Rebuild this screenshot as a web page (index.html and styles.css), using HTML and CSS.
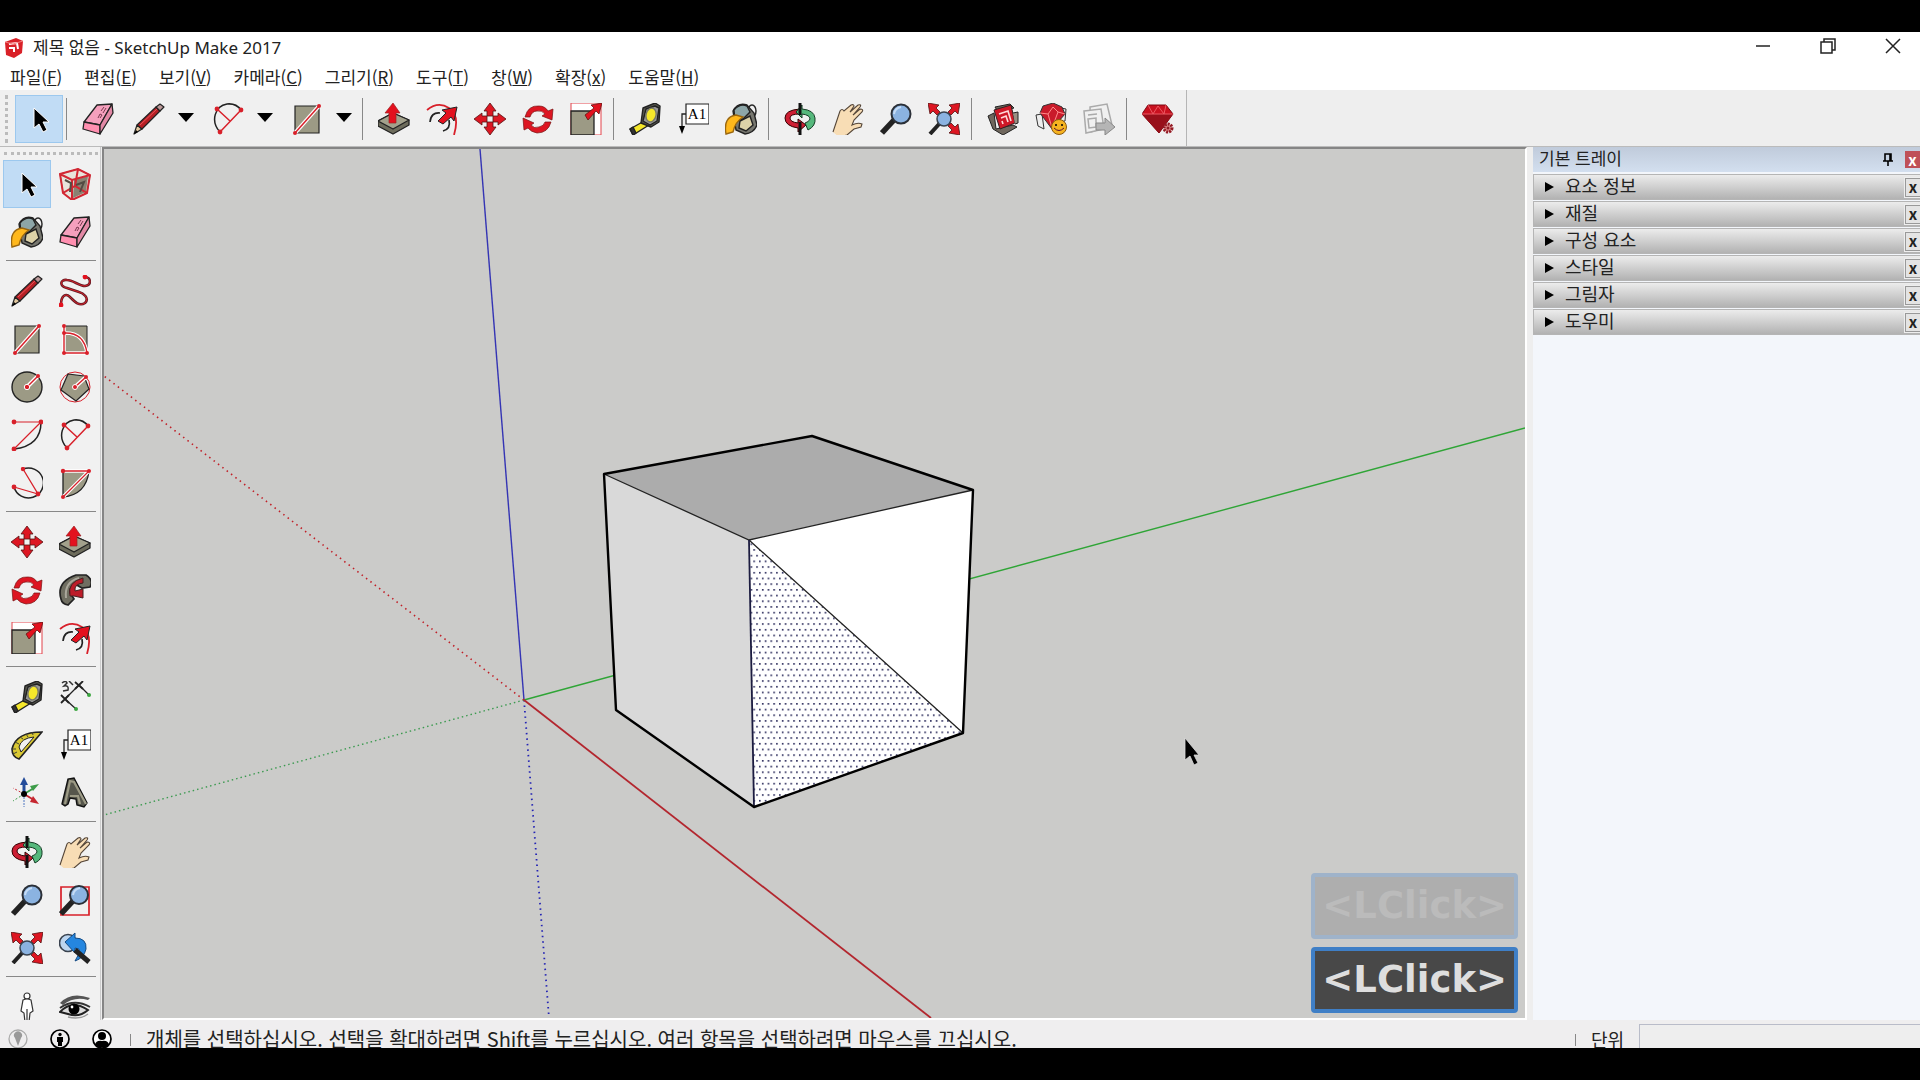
FILE: index.html
```html
<!DOCTYPE html>
<html lang="ko">
<head>
  <meta charset="UTF-8" />
  <meta name="viewport" content="width=device-width, initial-scale=1.0"/>
  <title>제목 없음 - SketchUp Make 2017</title>
  <link rel="stylesheet" href="styles.css">
</head>
<body>
  <!-- Icon set -->
  <svg class="icon-defs" aria-hidden="true">
    <symbol id="i-select" viewBox="0 0 32 32"><path d="M11 5v20l5-4 4 8 4-2-4-8h6z" fill="#000" stroke="#fff" stroke-width="1"/></symbol>
    <symbol id="i-eraser" viewBox="0 0 32 32"><g stroke="#222" stroke-width="1.3" stroke-linejoin="round"><path d="M15 2l15-1-12 21-16-3z" fill="#f5a0bd"/><path d="M2 19l16 3v9L1 26z" fill="#ff8fb0"/><path d="M30 1l1 9-13 21v-9z" fill="#e389a6"/></g><path d="M16 15l2-4 2 1-2 3m1-7l3-4m-1 6l3-5" fill="none" stroke="#7a3a50"/></symbol>
    <symbol id="i-pencil" viewBox="0 0 32 32"><g stroke="#222" stroke-width="1.2" stroke-linejoin="round"><path d="M1 31l3-9 5 4z" fill="#e3c9a0"/><path d="M4 22L23 4l4 4L9 26z" fill="#b81f25"/><path d="M23 4l4-3 4 3-4 4z" fill="#b99"/></g><path d="M1 31l2-4 2 2z"/><path d="M7 22L24 6" stroke="#e8575a" stroke-width="1"/></symbol>
    <symbol id="i-arc" viewBox="0 0 32 32"><path d="M8 29C-2 18 3 3 15 1q9-1 14 6" fill="none" stroke="#222" stroke-width="1.5"/><path d="M29 7L8 29M5 6l13 12" fill="none" stroke="#d8202a" stroke-width="1.5"/><g fill="#d8202a"><circle cx="29" cy="7" r="2.4"/><circle cx="8" cy="29" r="2.4"/><circle cx="5" cy="6" r="2.4"/></g></symbol>
    <symbol id="i-rect" viewBox="0 0 32 32"><path d="M4 3h24v27H4z" fill="#9c9a85" stroke="#222" stroke-width="1.2"/><path d="M4 30L28 3" stroke="#fff" stroke-width="4"/><path d="M4 30L28 3" stroke="#d8202a" stroke-width="1.5"/><g fill="#d8202a"><circle cx="28" cy="3" r="2"/><circle cx="4" cy="30" r="2"/></g></symbol>
    <symbol id="i-pushpull" viewBox="0 0 32 32"><g stroke="#222" stroke-width="1.3" stroke-linejoin="round"><path d="M0 18l15-8 16 7v5L15 31 0 23z" fill="#6d6c5c"/><path d="M0 18l15-8 16 7-16 9z" fill="#a3a18c"/><path d="M11 20V10H7l8-10 7 10h-4v10z" fill="#e3111e" stroke="#922" stroke-width=".7"/></g></symbol>
    <symbol id="i-offset" viewBox="0 0 32 32"><path d="M1 7Q12-2 23 5t5 27" fill="none" stroke="#d8202a" stroke-width="1.8"/><path d="M4 19Q5 9 14 10m9 7q2 9-6 11" fill="none" stroke="#222" stroke-width="1.7"/><path d="M12 18l8-8-4-3L31 4l-3 14-3-4-8 7z" fill="#e3111e" stroke="#222"/></symbol>
    <symbol id="i-move" viewBox="0 0 32 32"><g fill="#dd1622" stroke="#511" stroke-width=".8"><path d="M16 0l6 8h-3v5h-6V8h-3z"/><path d="M16 32l6-8h-3v-5h-6v5h-3z"/><path d="M0 16l8-6v3h5v6H8v3z"/><path d="M32 16l-8-6v3h-5v6h5v3z"/></g></symbol>
    <symbol id="i-rotate" viewBox="0 0 32 32"><g fill="#dd1622" stroke="#711" stroke-width=".7"><path d="M3 14Q6 2 17 3q6 0 9 5l5-2-1 11-10-4 3-2q-3-4-8-3-5 0-7 6z"/><path d="M29 19q-3 11-14 11-6-1-9-5l-4 2-1-12 11 5-3 2q3 4 8 2 5-1 6-5z"/></g></symbol>
    <symbol id="i-scale" viewBox="0 0 32 32"><path d="M1 0h30v32H1z" fill="#fff" stroke="#e2424a" stroke-width="1"/><path d="M1 8h23v24H1z" fill="#9c9a85" stroke="#222" stroke-width="1.3"/><path d="M15 12l9-7-3-3L32 0l-3 11-3-3-8 9z" fill="#e3111e" stroke="#611" stroke-width=".8"/></symbol>
    <symbol id="i-tape" viewBox="0 0 32 32"><g stroke="#222" stroke-width="1.4" stroke-linejoin="round"><path d="M1 26l16-9 3 5L4 32z" fill="#f5e72a"/><path d="M1 26l3-2 3 6-3 2z" fill="#333"/><path d="M14 5l12-5 5 3-1 16-8 5-10-4z" fill="#55554c"/><path d="M17 6l9-3 4 2-2 13-7 4-7-4z" fill="#999"/><ellipse cx="22" cy="12" rx="5" ry="7" transform="rotate(15 22 12)" fill="#f5e72a" stroke="#776"/></g></symbol>
    <symbol id="i-text" viewBox="0 0 32 32"><path d="M9 1h23v20H9z" fill="#fff" stroke="#222" stroke-width="1.2"/><path d="M9 11H5v12" fill="none" stroke="#222" stroke-width="1.3"/><path d="M2 23h6l-3 8z"/><text x="20" y="16" text-anchor="middle" class="icon-text">A1</text></symbol>
    <symbol id="i-paint" viewBox="0 0 32 32"><g stroke="#222" stroke-width="1.4"><ellipse cx="27" cy="8" rx="4" ry="6" fill="none"/><path d="M8 8Q13-1 22 2l7 8 3 12q-3 8-12 9l-9-4z" fill="#77776f"/><path d="M9 7q6-7 13-4l3 6-7 7-8 3z" fill="#8da6a8"/><path d="M15 18l10-5 3 9-7 6-7-3z" fill="#ddd2a8"/><path d="M1 31Q-2 14 11 12l7 2Q10 19 8 29z" fill="#ffb81c" stroke="#9a6710"/></g></symbol>
    <symbol id="i-orbit" viewBox="0 0 32 32"><path d="M16 6Q1 7 1 15q0 8 13 10v4l8-7-8-6v4Q6 19 6 15t10-4z" fill="#cd1e33" stroke="#300" /><path d="M31 15q-1-8-13-9V2l-6 7 6 6v-4q8 1 8 5-1 3-5 4l3 7q8-4 7-12z" fill="#56b87c" stroke="#153d25"/><path d="M16 0v12M16 19v13" stroke="#111" stroke-width="3"/></symbol>
    <symbol id="i-hand" viewBox="0 0 32 32"><path d="M1 29l5-15 2-6Q10 5 12 8l7-6q3-1 3 1l-4 6 8-7q4-1 2 2l-7 8 7-6q4 0 2 3l-8 8-2 5q6-3 10-1l-1 3-7 2-7 6-8 2" fill="#f8ddb5" stroke="#554638" stroke-width="1.1"/></symbol>
    <symbol id="i-zoom" viewBox="0 0 32 32"><path d="M14 17L2 30" stroke="#222" stroke-width="5.5"/><circle cx="21" cy="11" r="9.5" fill="#8bb3e1" stroke="#2b3038" stroke-width="2"/><path d="M14 11q1-6 7-7" fill="none" stroke="#c5dcf6" stroke-width="2"/></symbol>
    <symbol id="i-extents" viewBox="0 0 32 32"><g fill="#dd1622" stroke="#511" stroke-width=".8"><path d="M0 0l11 2-3 3 4 4-3 3-4-4-3 3z"/><path d="M32 0L21 2l3 3-4 4 3 3 4-4 3 3z"/><path d="M32 32l-11-2 3-3-4-4 3-3 4 4 3-3z"/></g><path d="M12 20L2 31" stroke="#222" stroke-width="4"/><circle cx="16" cy="16" r="7" fill="#8bb3e1" stroke="#39424e" stroke-width="1.5"/></symbol>
    <symbol id="i-warehouse" viewBox="0 0 32 32"><path d="M1 13l6-3 2 16 17-4 4 2-14 8-10-6zM8 4l15-3 4 4-16 4z" fill="#6f675d" stroke="#222"/><path d="M7 7l17-5 4 18-15 6z" fill="#cf1827" stroke="#322"/><path d="M12 11l9-3 3 10m-10-3l5-2 2 6m-6-1l1 3" fill="none" stroke="#ffd9d9" stroke-width="1.6"/><path d="M26 10l5-1v11l-3 1" fill="#999084" stroke="#222"/></symbol>
    <symbol id="i-extwh" viewBox="0 0 32 32"><path d="M1 12l6-1 2 15-6-3zM26 5l5 1-1 12-5 1z" fill="#eee" stroke="#333"/><path d="M8 3l10-3 9 4 3 7-13 15L5 10z" fill="#c91b2a" stroke="#333"/><path d="M5 10l8 1 5-7 5 5 7 2M13 11l4 14 6-16" fill="none" stroke="#ff8b8b"/><circle cx="24" cy="24" r="7.5" fill="#f6b320" stroke="#8a590e"/><circle cx="21" cy="22" r="1"/><circle cx="27" cy="22" r="1"/><path d="M19 25q5 5 10 0" fill="none" stroke="#513"/></symbol>
    <symbol id="i-layout" viewBox="0 0 32 32"><g fill="#f0f0f0" stroke="#aaa" stroke-width="1.5"><path d="M7 4l17-3 5 21-21 7z"/><path d="M1 8l17-2 3 20-18 4z"/><path d="M5 12l9-1m-9 5l8-1v9l-7 1z"/></g><path d="M13 20h9v-5l10 9-10 8v-5h-9z" fill="#b5b5b5" stroke="#888"/></symbol>
    <symbol id="i-ruby" viewBox="0 0 32 32"><path d="M6 2h18l7 9-14 19L0 11z" fill="#c9111f" stroke="#7c0912"/><path d="M0 11h31L17 30z" fill="#98101a"/><path d="M6 2l5 9 5-8 6 8 2-9M0 11h31" fill="none" stroke="#ed5862" stroke-width="1"/><circle cx="26" cy="25" r="4" fill="#d88" stroke="#931a24" stroke-width="3" stroke-dasharray="2 1"/><circle cx="26" cy="25" r="1.5" fill="#931a24"/></symbol>
    <symbol id="i-component" viewBox="0 0 32 32"><path d="M1 6l18-5 12 6-3 18-15 7L4 25z" fill="#e8e4dc" stroke="#4a3533"/><path d="M15 12l14-4-2 16-13 6z" fill="#8a8272"/><g fill="none" stroke="#d32733" stroke-width="2"><path d="M1 6l18-5 12 6-3 18-15 7L4 25zM1 6l12 6 18-5M13 12v20M4 25l12-7 12 7M19 1l-3 17"/></g><path d="M6 12l6 3-1 9m6-7l8-3-4 10" fill="none" stroke="#534c43" stroke-width="2"/></symbol>
    <symbol id="i-freehand" viewBox="0 0 32 32"><g fill="none"><path d="M2 30C2 20 7 18 11 22c4 4 9 10 15 6 5-5-2-10-6-11L8 13C0 11 1 4 8 5c6 0 12 6 18 6 7-1 6-9 0-9" stroke="#641d25" stroke-width="2.6"/><path d="M2 30C2 20 7 18 11 22c4 4 9 10 15 6 5-5-2-10-6-11L8 13C0 11 1 4 8 5c6 0 12 6 18 6 7-1 6-9 0-9" stroke="#d8202a"/></g><g fill="#e3111e"><circle cx="2" cy="30" r="2.4"/><circle cx="26" cy="2" r="2.4"/></g></symbol>
    <symbol id="i-rotrect" viewBox="0 0 32 32"><path d="M5 3h23v27H5z" fill="#9c9a85" stroke="#222"/><path d="M5 10q20-1 23 20H5V2" fill="none" stroke="#fff" stroke-width="3.5"/><path d="M5 10q20-1 23 20H5V2" fill="none" stroke="#d8202a" stroke-width="1.4"/><g fill="#d8202a"><circle cx="5" cy="3" r="2"/><circle cx="5" cy="10" r="2"/><circle cx="5" cy="30" r="2"/><circle cx="28" cy="30" r="2"/></g></symbol>
    <symbol id="i-circle" viewBox="0 0 32 32"><circle cx="16" cy="16" r="15" fill="#9c9a85" stroke="#222" stroke-width="1.4"/><path d="M16 16L27 5" stroke="#fff" stroke-width="4"/><path d="M16 16L27 5" stroke="#d8202a" stroke-width="1.5"/><circle cx="16" cy="16" r="2.7" fill="#d8202a" stroke="#fff"/><circle cx="27" cy="5" r="2" fill="#d8202a"/></symbol>
    <symbol id="i-polygon" viewBox="0 0 32 32"><circle cx="16" cy="16" r="15" fill="none" stroke="#d8202a"/><path d="M9 3l16 2 5 13-13 12L2 19z" fill="#9c9a85" stroke="#222" stroke-width="1.2"/><path d="M16 16L27 6" stroke="#fff" stroke-width="4"/><path d="M16 16L27 6" stroke="#d8202a" stroke-width="1.5"/><circle cx="16" cy="16" r="2.5" fill="#d8202a" stroke="#fff"/><circle cx="27" cy="6" r="2" fill="#d8202a"/></symbol>
    <symbol id="i-arc2" viewBox="0 0 32 32"><path d="M30 3Q30 27 3 30" fill="none" stroke="#222" stroke-width="1.5"/><path d="M3 3h27L3 30" fill="none" stroke="#d8202a" stroke-width="1.2"/><g fill="#d8202a"><circle cx="3" cy="3" r="2.4"/><circle cx="30" cy="3" r="2.4"/><circle cx="3" cy="30" r="2.4"/></g></symbol>
    <symbol id="i-arc3" viewBox="0 0 32 32"><path d="M12 2A15 15 0 1 1 3 20" fill="none" stroke="#222" stroke-width="1.5"/><path d="M12 2l15 25-24-7" fill="none" stroke="#d8202a" stroke-width="1.3"/><g fill="#d8202a"><circle cx="12" cy="2" r="2.2"/><circle cx="27" cy="27" r="2.4"/><circle cx="3" cy="20" r="2.4"/></g></symbol>
    <symbol id="i-pie" viewBox="0 0 32 32"><path d="M4 4h26Q27 28 4 30z" fill="#9c9a85" stroke="#222" stroke-width="1.3"/><path d="M4 4h26L4 30" fill="none" stroke="#fff" stroke-width="3.5"/><path d="M4 4h26L4 30" fill="none" stroke="#d8202a" stroke-width="1.3"/><g fill="#d8202a"><circle cx="4" cy="4" r="2.2"/><circle cx="30" cy="4" r="2"/><circle cx="4" cy="30" r="2"/></g></symbol>
    <symbol id="i-follow" viewBox="0 0 32 32"><path d="M2 25Q-3 8 17 1h10q8 5 4 12l-8 1-7-4q-6 3-5 9l4 6-6 6q-6-1-7-6z" fill="#6f6e61" stroke="#222" stroke-width="1.7"/><path d="M7 24Q5 8 20 4" fill="none" stroke="#aaa79b" stroke-width="2"/><path d="M11 22Q8 8 24 4v5q-9 1-8 8l8-2v9l-9-2z" fill="#bd1c29" stroke="#422"/></symbol>
    <symbol id="i-dimension" viewBox="0 0 32 32"><path d="M20 4L6 18m14-14l10 10M6 18l11 10" stroke="#222" stroke-width="1.3"/><path d="M16 1l8 7m0-8l-8 8M2 14l8 8m0-8l-8 8" stroke="#222" stroke-width="1.8"/><path d="M3 2q4-3 5 0l-3 3q5-1 4 4l-5 1M10 0l4 4" fill="none" stroke="#333" stroke-width="1.5"/><g fill="#3aa63f"><circle cx="30" cy="14" r="2"/><circle cx="17" cy="28" r="2"/></g></symbol>
    <symbol id="i-protractor" viewBox="0 0 32 32"><path d="M31 3Q5 3 1 20q0 8 7 10z" fill="#d9c833" stroke="#222" stroke-width="1.6"/><path d="M23 8Q10 9 8 18l2 5z" fill="#f0f0f0" stroke="#222"/><path d="M21 3l1 3m-7-1l2 3m-8 0l3 2m-8 3l4 2m-7 5h4m-3 5l4-2" stroke="#443"/></symbol>
    <symbol id="i-axes" viewBox="0 0 32 32"><path d="M13 17V4" stroke="#244c9a" stroke-width="3"/><path d="M9 8l4-8 4 8z" fill="#244c9a"/><path d="M13 17l10-6" stroke="#3d9c49" stroke-width="2"/><path d="M19 9l9-2-6 7z" fill="#3d9c49"/><path d="M13 17l10 6" stroke="#c62730" stroke-width="2"/><path d="M22 19l6 8-9-2z" fill="#c62730"/><path d="M13 17v13" stroke="#4f77c0" stroke-dasharray="2 1"/><path d="M13 17L2 24" stroke="#3d9c49" stroke-dasharray="2 2"/><path d="M13 17L2 11" stroke="#c62730" stroke-dasharray="2 2"/><circle cx="13" cy="17" r="3"/></symbol>
    <symbol id="i-3dtext" viewBox="0 0 32 32"><path d="M3 27L9 2l6-1 13 25-3 4-7-2-1-6-6-1-2 6-3 2z" fill="#56564c" stroke="#111" stroke-width="1.4"/><path d="M6 27l5-23 4 1 12 22m-16-8h8l2 8" fill="none" stroke="#9c9a85" stroke-width="2.2"/></symbol>
    <symbol id="i-zoomwin" viewBox="0 0 32 32"><path d="M2 3h28v28H2z" fill="none" stroke="#d8202a" stroke-width="1.7"/><path d="M14 17L2 30" stroke="#222" stroke-width="5.5"/><circle cx="20" cy="11" r="9" fill="#8bb3e1" stroke="#2b3038" stroke-width="2"/><path d="M14 11q1-6 7-7" fill="none" stroke="#c5dcf6" stroke-width="2"/></symbol>
    <symbol id="i-previous" viewBox="0 0 32 32"><circle cx="9" cy="11" r="8.5" fill="#bcd5ef" stroke="#39424e" stroke-width="1.6"/><path d="M6 10l10-9v5q12 0 11 11-2 9-11 12 5-7 4-12l-4-1v5z" fill="#2586df" stroke="#154b83"/><path d="M16 18l14 12" stroke="#222" stroke-width="5"/></symbol>
    <symbol id="i-person" viewBox="0 0 32 32"><g fill="#fff" stroke="#333" stroke-width="1.2"><circle cx="16" cy="5" r="3"/><path d="M12 9q4-2 8 0l2 11-3 2-1 9h-4l-1-9-3-2z"/><path d="M16 18v12"/></g><path d="M11 31h4m3 0h3" stroke="#c33" stroke-width="2"/></symbol>
    <symbol id="i-eye" viewBox="0 0 32 32"><path d="M1 12Q12 0 31 7l-2 2Q15 5 4 14z" fill="#555"/><path d="M1 21q12-13 28-2-9 8-20 4z" fill="#ddd" stroke="#222" stroke-width="2"/><path d="M1 17q14-10 30-1" fill="none" stroke="#333" stroke-width="2"/><circle cx="15" cy="18" r="5.5"/><circle cx="13" cy="16" r="1.4" fill="#fff"/><path d="M9 26q12 3 20-3" fill="none" stroke="#999" stroke-width="1.5"/></symbol>
  </svg>

  <div class="window">
    <header class="titlebar">
      <svg class="app-logo" viewBox="0 0 18 20"><path d="M0 4l11-4 7 3-1 12-8 5-8-3z" fill="#d92128"/><path d="M4 6l8-1 1 6M4 10l5 0v4" fill="none" stroke="#fff" stroke-width="2"/><path d="M0 4l8 2 10-3" fill="none" stroke="#f27c7c"/></svg>
      <h1>제목 없음 - SketchUp Make 2017</h1>
      <div class="window-buttons">
        <button aria-label="최소화"><svg viewBox="0 0 16 16"><path d="M1 8h14"/></svg></button>
        <button aria-label="이전 크기로"><svg viewBox="0 0 16 16"><path d="M1 4h11v11H1zM4 4V1h11v11h-3"/></svg></button>
        <button aria-label="닫기"><svg viewBox="0 0 16 16"><path d="M1 1l14 14M15 1L1 15"/></svg></button>
      </div>
    </header>

    <nav class="menubar">
      <button>파일(<u>F</u>)</button>
      <button>편집(<u>E</u>)</button>
      <button>보기(<u>V</u>)</button>
      <button>카메라(<u>C</u>)</button>
      <button>그리기(<u>R</u>)</button>
      <button>도구(<u>T</u>)</button>
      <button>창(<u>W</u>)</button>
      <button>확장(<u>x</u>)</button>
      <button>도움말(<u>H</u>)</button>
    </nav>

    <div class="toolbar">
      <button class="tool active" aria-label="선택"><svg><use href="#i-select"/></svg></button>
      <span class="sep"></span>
      <button class="tool" aria-label="지우기"><svg><use href="#i-eraser"/></svg></button>
      <div class="split"><button class="tool" aria-label="선"><svg><use href="#i-pencil"/></svg></button><button class="drop" aria-label="선 도구"></button></div>
      <div class="split"><button class="tool" aria-label="호"><svg><use href="#i-arc"/></svg></button><button class="drop" aria-label="호 도구"></button></div>
      <div class="split"><button class="tool" aria-label="직사각형"><svg><use href="#i-rect"/></svg></button><button class="drop" aria-label="도형 도구"></button></div>
      <span class="sep"></span>
      <button class="tool" aria-label="밀기/끌기"><svg><use href="#i-pushpull"/></svg></button>
      <button class="tool" aria-label="오프셋"><svg><use href="#i-offset"/></svg></button>
      <button class="tool" aria-label="이동"><svg><use href="#i-move"/></svg></button>
      <button class="tool" aria-label="회전"><svg><use href="#i-rotate"/></svg></button>
      <button class="tool" aria-label="배율"><svg><use href="#i-scale"/></svg></button>
      <span class="sep"></span>
      <button class="tool" aria-label="줄자"><svg><use href="#i-tape"/></svg></button>
      <button class="tool" aria-label="텍스트"><svg><use href="#i-text"/></svg></button>
      <button class="tool" aria-label="페인트통"><svg><use href="#i-paint"/></svg></button>
      <span class="sep"></span>
      <button class="tool" aria-label="궤도"><svg><use href="#i-orbit"/></svg></button>
      <button class="tool" aria-label="이동 보기"><svg><use href="#i-hand"/></svg></button>
      <button class="tool" aria-label="확대/축소"><svg><use href="#i-zoom"/></svg></button>
      <button class="tool" aria-label="범위 확대"><svg><use href="#i-extents"/></svg></button>
      <span class="sep"></span>
      <button class="tool" aria-label="3D Warehouse"><svg><use href="#i-warehouse"/></svg></button>
      <button class="tool" aria-label="Extension Warehouse"><svg><use href="#i-extwh"/></svg></button>
      <button class="tool" aria-label="LayOut"><svg><use href="#i-layout"/></svg></button>
      <span class="sep"></span>
      <button class="tool" aria-label="확장 관리자"><svg><use href="#i-ruby"/></svg></button>
    </div>

    <main class="workspace">
      <aside class="toolset">
        <div class="tool-group">
          <button class="tool active" aria-label="선택"><svg><use href="#i-select"/></svg></button>
          <button class="tool" aria-label="구성 요소 만들기"><svg><use href="#i-component"/></svg></button>
          <button class="tool" aria-label="페인트통"><svg><use href="#i-paint"/></svg></button>
          <button class="tool" aria-label="지우기"><svg><use href="#i-eraser"/></svg></button>
        </div>
        <div class="tool-group">
          <button class="tool" aria-label="선"><svg><use href="#i-pencil"/></svg></button>
          <button class="tool" aria-label="자유곡선"><svg><use href="#i-freehand"/></svg></button>
          <button class="tool" aria-label="직사각형"><svg><use href="#i-rect"/></svg></button>
          <button class="tool" aria-label="회전된 직사각형"><svg><use href="#i-rotrect"/></svg></button>
          <button class="tool" aria-label="원"><svg><use href="#i-circle"/></svg></button>
          <button class="tool" aria-label="다각형"><svg><use href="#i-polygon"/></svg></button>
          <button class="tool" aria-label="호"><svg><use href="#i-arc2"/></svg></button>
          <button class="tool" aria-label="2점 호"><svg><use href="#i-arc"/></svg></button>
          <button class="tool" aria-label="3점 호"><svg><use href="#i-arc3"/></svg></button>
          <button class="tool" aria-label="파이"><svg><use href="#i-pie"/></svg></button>
        </div>
        <div class="tool-group">
          <button class="tool" aria-label="이동"><svg><use href="#i-move"/></svg></button>
          <button class="tool" aria-label="밀기/끌기"><svg><use href="#i-pushpull"/></svg></button>
          <button class="tool" aria-label="회전"><svg><use href="#i-rotate"/></svg></button>
          <button class="tool" aria-label="따라가기"><svg><use href="#i-follow"/></svg></button>
          <button class="tool" aria-label="배율"><svg><use href="#i-scale"/></svg></button>
          <button class="tool" aria-label="오프셋"><svg><use href="#i-offset"/></svg></button>
        </div>
        <div class="tool-group">
          <button class="tool" aria-label="줄자"><svg><use href="#i-tape"/></svg></button>
          <button class="tool" aria-label="치수"><svg><use href="#i-dimension"/></svg></button>
          <button class="tool" aria-label="각도기"><svg><use href="#i-protractor"/></svg></button>
          <button class="tool" aria-label="텍스트"><svg><use href="#i-text"/></svg></button>
          <button class="tool" aria-label="축"><svg><use href="#i-axes"/></svg></button>
          <button class="tool" aria-label="3D 텍스트"><svg><use href="#i-3dtext"/></svg></button>
        </div>
        <div class="tool-group">
          <button class="tool" aria-label="궤도"><svg><use href="#i-orbit"/></svg></button>
          <button class="tool" aria-label="이동 보기"><svg><use href="#i-hand"/></svg></button>
          <button class="tool" aria-label="확대/축소"><svg><use href="#i-zoom"/></svg></button>
          <button class="tool" aria-label="창 확대"><svg><use href="#i-zoomwin"/></svg></button>
          <button class="tool" aria-label="범위 확대"><svg><use href="#i-extents"/></svg></button>
          <button class="tool" aria-label="이전"><svg><use href="#i-previous"/></svg></button>
        </div>
        <div class="tool-group">
          <button class="tool" aria-label="카메라 배치"><svg><use href="#i-person"/></svg></button>
          <button class="tool" aria-label="둘러보기"><svg><use href="#i-eye"/></svg></button>
        </div>
      </aside>

      <section class="viewport">
        <svg class="scene" viewBox="104 149 1421 869" preserveAspectRatio="xMinYMin slice">
          <defs>
            <pattern id="dots" width="5.7" height="11.4" patternUnits="userSpaceOnUse">
              <path d="M1 2h1.5v1.5H1zM3.9 7.7h1.5v1.5H3.900z" fill="#1c1c50"/>
            </pattern>
          </defs>
          <!-- axes -->
          <g fill="none" stroke-width="1.4">
            <path d="M524 700L480 149" stroke="#3434b4"/>
            <path d="M524 700L549 1018" stroke="#2424b4" stroke-width="1.8" stroke-dasharray="1.5 4"/>
            <path d="M524 700L1525 428" stroke="#2fa536"/>
            <path d="M524 700L104 815" stroke="#3c9a50" stroke-dasharray="1.5 3"/>
            <path d="M524 700L931 1018" stroke="#b3262e" stroke-width="1.8"/>
            <path d="M524 700L104 376" stroke="#c02028" stroke-width="1.6" stroke-dasharray="1.5 4"/>
          </g>
          <!-- box -->
          <path d="M604 474L812 436l161 54-224 50z" fill="#acacac"/>
          <path d="M604 474l145 66 5 267-138-97z" fill="#d9d9d9"/>
          <path d="M749 540l224-50-10 243-209 74z" fill="#fff"/>
          <path d="M749 540l214 193-209 74z" fill="url(#dots)"/>
          <path d="M604 474l145 66 224-50M749 540l214 193" fill="none" stroke="#222" stroke-width="1.3"/>
          <path d="M749 540l5 267" fill="none" stroke="#1c1c40" stroke-width="1.8"/>
          <path d="M604 474L812 436l161 54-10 243-209 74-138-97z" fill="none" stroke="#000" stroke-width="2.4" stroke-linejoin="round"/>
          <path d="M1185 738v22l5-4 4 9 4-2-4-8h5z" fill="#000" stroke="#ddd" stroke-width=".8"/>
        </svg>
        <div class="keys">
          <kbd class="faded">&lt;LClick&gt;</kbd>
          <kbd>&lt;LClick&gt;</kbd>
        </div>
      </section>

      <aside class="tray">
        <div class="tray-header">
          <h2>기본 트레이</h2>
          <button class="pin" aria-label="자동 숨기기"><svg viewBox="0 0 12 14"><path d="M3 1h6v7H3zM1 8h10M6 8v5M8 1v7" fill="none" stroke="#000" stroke-width="1.6"/></svg></button>
          <button class="tray-close" aria-label="닫기">x</button>
        </div>
        <div class="panel"><button class="panel-title">요소 정보</button><button class="panel-close" aria-label="닫기">x</button></div>
        <div class="panel"><button class="panel-title">재질</button><button class="panel-close" aria-label="닫기">x</button></div>
        <div class="panel"><button class="panel-title">구성 요소</button><button class="panel-close" aria-label="닫기">x</button></div>
        <div class="panel"><button class="panel-title">스타일</button><button class="panel-close" aria-label="닫기">x</button></div>
        <div class="panel"><button class="panel-title">그림자</button><button class="panel-close" aria-label="닫기">x</button></div>
        <div class="panel"><button class="panel-title">도우미</button><button class="panel-close" aria-label="닫기">x</button></div>
      </aside>
    </main>

    <footer class="statusbar">
      <svg class="status-icon" viewBox="0 0 20 20"><circle cx="10" cy="10" r="9" fill="none" stroke="#aaa" stroke-width="1.3"/><path d="M10 17L7 9a4 4 0 1 1 6 0z" fill="#999"/></svg>
      <svg class="status-icon" viewBox="0 0 20 20"><circle cx="10" cy="10" r="9" fill="none" stroke="#000" stroke-width="1.7"/><circle cx="10" cy="5.500" r="1.700"/><path d="M7 8h6v5h-1v4H8v-4H7z"/></svg>
      <svg class="status-icon" viewBox="0 0 20 20"><circle cx="10" cy="10" r="9" fill="#fff" stroke="#000" stroke-width="1.7"/><circle cx="10" cy="7" r="4"/><path d="M3 16q1-5 7-4 6-1 7 4-7 5-14 0z"/></svg>
      <span class="divider"></span>
      <p>개체를 선택하십시오. 선택을 확대하려면 Shift를 누르십시오. 여러 항목을 선택하려면 마우스를 끄십시오.</p>
      <span class="divider"></span>
      <label for="measure">단위</label>
      <input type="text" id="measure">
    </footer>
  </div>
</body>
</html>
```
FILE: styles.css
```css
* {
  box-sizing: border-box;
}
body {
  display: flex;
  height: 100vh;
  margin: 0;
  padding: 32px 0;
  background: #000;
  font-family: "Noto Sans CJK KR", sans-serif;
  font-size: 17px;
  color: #222;
}
button {
  margin: 0;
  padding: 0;
  border: none;
  background: none;
  font: inherit;
  color: inherit;
}
h1, h2, p {
  margin: 0;
  font-weight: normal;
}
.icon-defs {
  display: none;
}
.icon-text {
  font: 15px "Liberation Serif", serif;
}
.window {
  flex: 1;
  min-width: 0;
  display: flex;
  flex-direction: column;
  background: #eee;
}

/* Title and menu */
.titlebar {
  display: flex;
  align-items: center;
  height: 31px;
  padding-left: 5px;
  background: #fff;
}
.app-logo {
  width: 18px;
  height: 20px;
  margin-right: 10px;
}
.titlebar h1 {
  flex: 1;
  font-family: "Noto Sans", "Noto Sans CJK KR", sans-serif;
  font-size: 17px;
  line-height: 30px;
}
.window-buttons {
  display: flex;
  gap: 11px;
}
.window-buttons button {
  display: flex;
  justify-content: center;
  align-items: center;
  width: 54px;
}
.window-buttons svg {
  width: 16px;
  height: 16px;
  margin-bottom: 3px;
  fill: none;
  stroke: #222;
  stroke-width: 1.5;
}
.menubar {
  display: flex;
  gap: 22px;
  height: 27px;
  padding-left: 10px;
  background: #fff;
  line-height: 27px;
}

/* Tools */
.tool {
  display: flex;
  justify-content: center;
  align-items: center;
  width: 48px;
  height: 48px;
}
.tool svg {
  width: 32px;
  height: 32px;
}
.tool.active {
  background: #c1dcf5;
  border: 1px solid #9cc8ee;
}
.toolbar {
  align-self: flex-start;
  display: flex;
  align-items: center;
  height: 56px;
  padding: 2px 4px 0 0;
  background: #f0f0f0;
  border-right: 1px solid #b5b5b5;
}
.toolbar::before {
  content: "";
  width: 4px;
  height: 48px;
  margin: 0 3px 0 5px;
  border-left: 3px dotted #bbb;
}
.sep {
  width: 11px;
  height: 42px;
  border-right: 7px solid transparent;
  background: linear-gradient(90deg, transparent 3px, #888 3px) no-repeat padding-box;
}
.split {
  display: flex;
  padding-right: 5px;
}
.split .tool {
  width: 54px;
}
.drop {
  display: flex;
  justify-content: center;
  align-items: center;
  width: 20px;
}
.drop::before {
  content: "";
  margin-bottom: 4px;
  border: 8px solid transparent;
  border-top: 9px solid #000;
  border-bottom: none;
}

/* Workspace */
.workspace {
  flex: 1;
  min-height: 0;
  display: flex;
  border-top: 1px solid #bbb;
}
.toolset {
  width: 101px;
  padding: 5px 0 0 3px;
  overflow: hidden;
  background: #f1f1f1;
  border-right: 1px solid #ccc;
}
.toolset::before {
  content: "";
  display: block;
  width: 94px;
  height: 5px;
  margin-left: 1px;
  border-top: 3px dotted #bbb;
}
.tool-group {
  display: grid;
  grid-template-columns: 48px 48px;
}
.tool-group + .tool-group {
  border-top: 1px solid #888;
  margin: 4px 4px 0 3px;
  padding-top: 6px;
}
.tool-group + .tool-group .tool {
  margin-left: -3px;
}
.viewport {
  flex: 1;
  min-width: 0;
  position: relative;
  margin-left: 1px;
  overflow: hidden;
  background: #cbcbc9;
  border: 2px solid #858585;
  border-right: 2px solid #fff;
  border-bottom: 2px solid #fff;
}
.scene {
  display: block;
  width: 100%;
  height: 100%;
}
.keys {
  position: absolute;
  right: 7px;
  bottom: 5px;
  display: grid;
  gap: 8px;
}
.keys kbd {
  padding: 0 7px;
  background: #484848;
  border: 4px solid #3f7fc6;
  border-radius: 4px;
  color: #dedede;
  font: bold 37px/58px "DejaVu Sans", sans-serif;
}
.keys .faded {
  background: #aeaeae;
  border-color: #9fb3ca;
  color: #bbb;
}

/* Tray */
.tray {
  width: 387px;
  margin-left: 6px;
  background: #f3f6fb;
}
.tray-header {
  display: flex;
  align-items: center;
  height: 25px;
  margin-bottom: 2px;
  padding-left: 6px;
  background: linear-gradient(#c0cbdb, #d3dfef);
}
.tray-header h2 {
  flex: 1;
  font-size: 17px;
  line-height: 22px;
  padding-bottom: 3px;
}
.pin {
  margin-right: 11px;
}
.pin svg {
  display: block;
  width: 12px;
  height: 14px;
}
.tray-close {
  width: 15px;
  height: 17px;
  background: #bf5058;
  color: #fff;
  font-size: 15px;
  font-weight: bold;
  line-height: 14px;
}
.panel {
  display: flex;
  align-items: center;
  height: 26px;
  margin-bottom: 1px;
  background: linear-gradient(#ececec, #b2b2b2);
  border: 1px solid #b5b5b5;
  border-right: none;
}
.panel-title {
  flex: 1;
  display: flex;
  align-items: center;
  gap: 11px;
  padding: 0 0 3px 11px;
  font-size: 18px;
  line-height: 21px;
}
.panel-title::before {
  content: "";
  margin-top: 2px;
  border: 5px solid transparent;
  border-left: 9px solid #000;
  border-right: none;
}
.panel-close {
  width: 15px;
  height: 19px;
  background: #e4e4e4;
  border: 1px solid #999;
  border-right: none;
  outline: 1px solid #eee;
  font-size: 15px;
  font-weight: bold;
  line-height: 16px;
}

/* Status bar */
.statusbar {
  display: flex;
  align-items: flex-start;
  height: 28px;
  padding-left: 8px;
  overflow: hidden;
  background: #efeeef;
  line-height: 38px;
  white-space: nowrap;
}
.status-icon {
  flex: none;
  width: 20px;
  height: 20px;
  margin: 9px 22px 0 0;
}
.divider {
  flex: none;
  width: 1px;
  height: 12px;
  margin: 14px 15px 0 0;
  background: #888;
}
.status-icon + .divider {
  margin-left: -4px;
}
.statusbar p {
  flex: 1;
  font-size: 20px;
}
.statusbar label {
  font-size: 18px;
}
.statusbar input {
  width: 281px;
  height: 34px;
  margin: 4px 0 0 15px;
  background: #eee;
  border: 1px solid #b9bcc9;
  border-right: none;
}
```
